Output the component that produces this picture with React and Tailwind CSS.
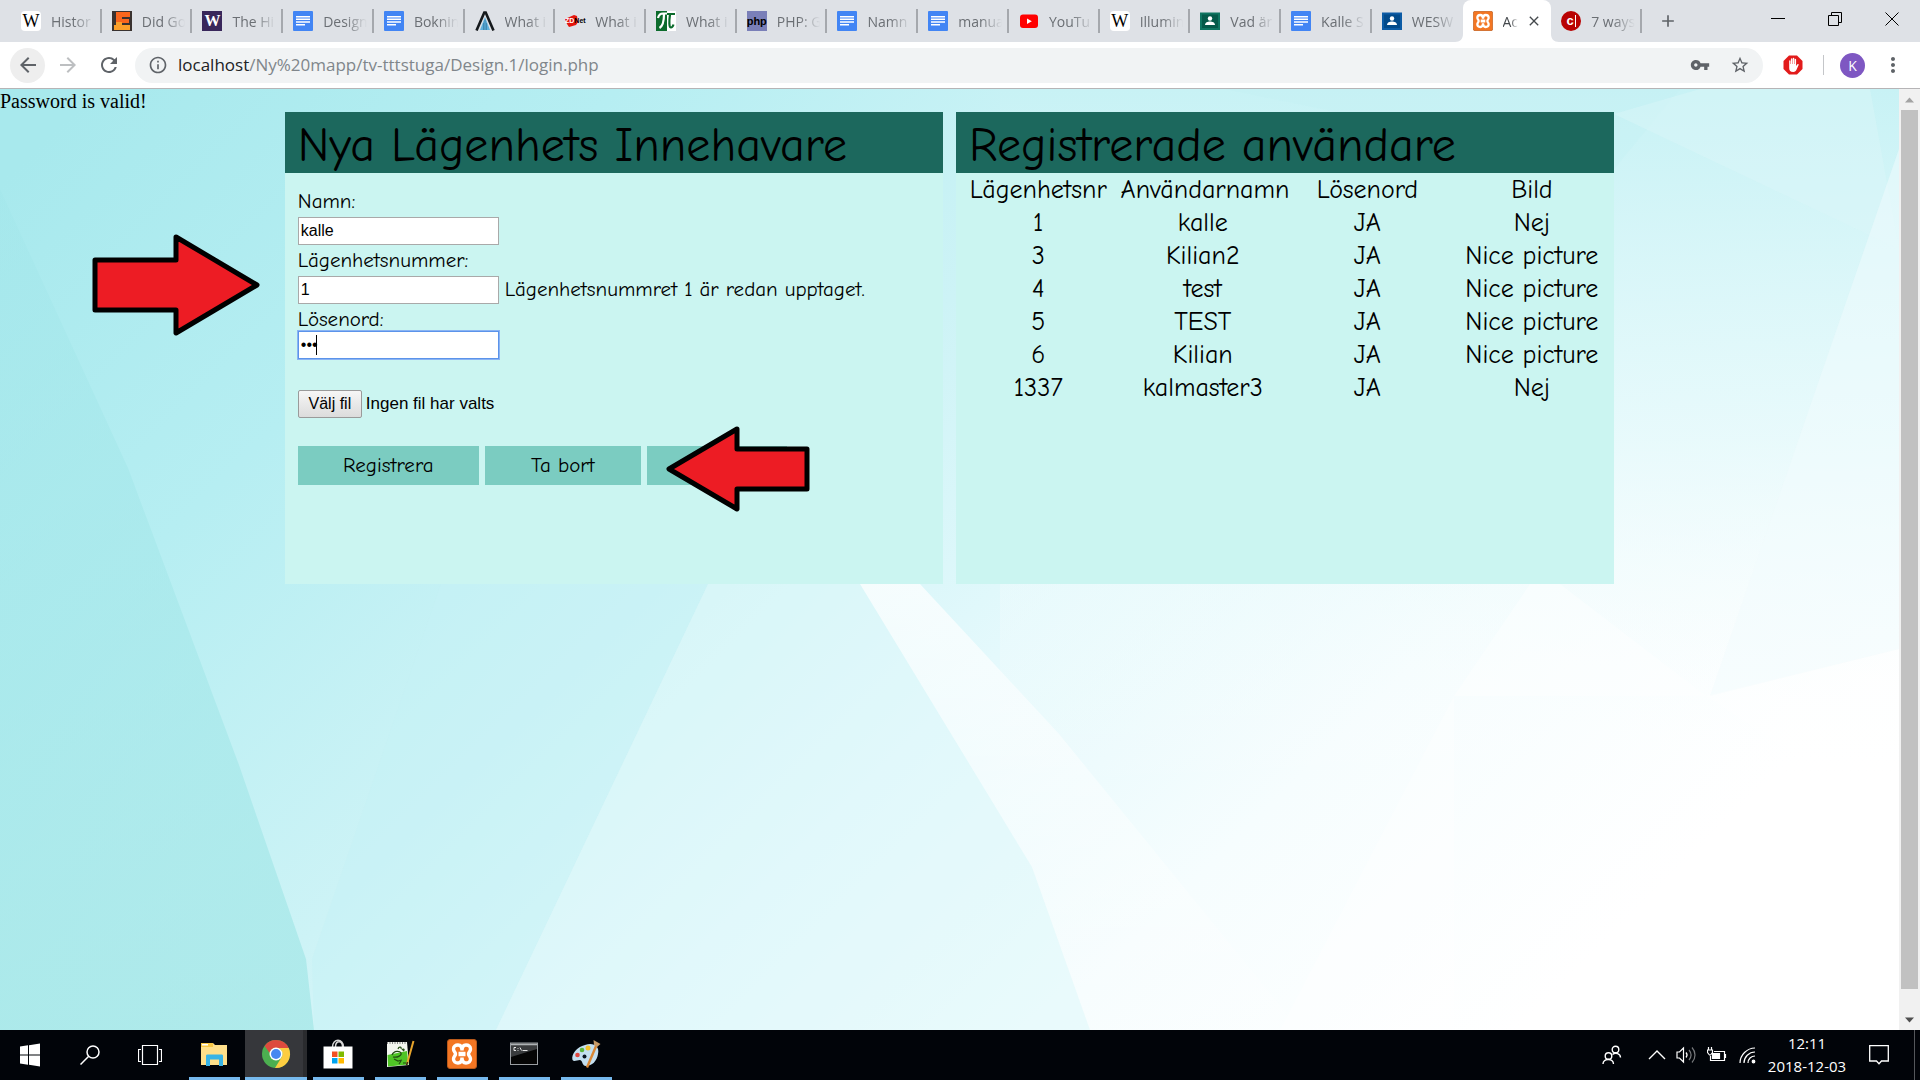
import React from "react";
import {
  MdArrowBack,
  MdArrowForward,
  MdRefresh,
  MdInfoOutline,
  MdVpnKey,
  MdStarBorder,
  MdMoreVert,
  MdAdd,
  MdClose,
} from "react-icons/md";

const UI = "font-['Segoe_UI','Open_Sans',sans-serif]";

/* ---------- favicons ---------- */

function WikiIcon() {
  return (
    <span className="flex size-5 items-center justify-center rounded-sm bg-white font-['Liberation_Serif',serif] text-[18px] leading-5 text-black">
      W
    </span>
  );
}

function UwIcon() {
  return (
    <span className="flex size-5 items-center justify-center bg-[#39275b] font-['Liberation_Serif',serif] text-[16px] leading-5 font-bold text-white">
      W
    </span>
  );
}

function EIcon() {
  return (
    <svg viewBox="0 0 20 20" className="size-5" aria-hidden="true">
      <rect width="20" height="20" fill="#3a3230" />
      <path d="M4 1h14v5h-8v2h7v4h-7v2h8v5H2v-5h2z" fill="#f9661d" />
      <path d="M4 11h6v3h8v5H2v-5h2z" fill="#fba02a" />
    </svg>
  );
}

function DocIcon() {
  return (
    <svg viewBox="0 0 20 20" className="size-5" aria-hidden="true">
      <rect width="20" height="20" rx="1" fill="#4285f4" />
      <path d="M3 4.900h14v1.500H3zM3 7.500h14V9H3zM3 10.200h14v1.500H3zM3 12.900h9v1.500H3z" fill="#fff" />
    </svg>
  );
}

function PeakIcon() {
  return (
    <svg viewBox="0 0 20 20" className="size-5" aria-hidden="true">
      <path d="M10 6l5 13H5z" fill="#5fb0dc" />
      <path d="M8.500 12v7M10 9v10M11.500 12v7" stroke="#2c6f97" strokeWidth=".6" />
      <path d="M1.500 19.500L9.300 1.500h1.400l7.800 18" fill="none" stroke="#15191c" strokeWidth="2.600" />
    </svg>
  );
}

function ZdIcon() {
  return (
    <span className="relative flex size-5 items-center justify-center font-['Liberation_Sans',sans-serif] text-[7px] leading-5 font-bold">
      <svg viewBox="0 0 20 20" className="absolute inset-0" aria-hidden="true">
        <path d="M0 8l9-4 3 1 1 6-2 3-7 2-2-3z" fill="#e5150c" />
      </svg>
      <span className="relative text-white">ZD</span>
      <span className="relative text-black">Net</span>
    </span>
  );
}

function PiIcon() {
  return (
    <span className="relative flex size-5 items-center justify-center bg-white">
      <svg viewBox="0 0 20 20" className="size-5" aria-hidden="true">
        <path d="M0 0h11v20H0z" fill="#0c6b2c" />
        <path d="M2 7c1-4 3-4.500 5-4.500h4M8 3c0 7-1 12-4.500 14" fill="none" stroke="#fff" strokeWidth="2.200" />
        <path d="M11 3h8M14 3.500c-1 7-1 13 1 13 1.500 0 2-1.500 2.500-3" fill="none" stroke="#0c6b2c" strokeWidth="2.200" />
      </svg>
    </span>
  );
}

function PhpIcon() {
  return (
    <span className="flex size-5 items-center justify-center bg-[#7a7fb8] font-['Liberation_Sans',sans-serif] text-[11px] leading-5 font-bold text-black">
      php
    </span>
  );
}

function YouTubeIcon() {
  return (
    <svg viewBox="0 0 20 20" className="size-5" aria-hidden="true">
      <rect x="1" y="3.500" width="18" height="13.500" rx="3" fill="#f00" />
      <path d="M8 7.400v5.600l4.800-2.800z" fill="#fff" />
    </svg>
  );
}

function ClassroomGlyph() {
  return (
    <>
      <circle cx="10" cy="7.500" r="2.200" fill="#fff" />
      <path d="M5 14c0-2.600 2.600-3.600 5-3.600s5 1 5 3.600z" fill="#fff" />
    </>
  );
}

function ClassroomGreen() {
  return (
    <svg viewBox="0 0 20 20" className="size-5" aria-hidden="true">
      <rect y="1.500" width="20" height="17.500" fill="#0f7561" />
      <rect x="2" y="3.500" width="16" height="13.500" fill="#055a4a" />
      <ClassroomGlyph />
    </svg>
  );
}

function ClassroomBlue() {
  return (
    <svg viewBox="0 0 20 20" className="size-5" aria-hidden="true">
      <rect y="1.500" width="20" height="17.500" fill="#0c5ba5" />
      <rect x="2" y="3.500" width="16" height="13.500" fill="#024a8b" />
      <ClassroomGlyph />
    </svg>
  );
}

function XamppIcon({ className }) {
  return (
    <svg viewBox="0 0 30 30" className={className} aria-hidden="true">
      <rect x=".5" y=".5" width="29" height="29" rx="2.500" fill="#f37623" stroke="#b9591a" />
      <path
        d="M15 11.500c0-4-1.500-5.500-4-5.500S6.500 7.500 6.500 10c0 2.600 2 3.300 2 5s-2 2.400-2 5c0 2.500 2 4 4.500 4s4-1.500 4-5.500c0 4 1.500 5.500 4 5.500s4.500-1.500 4.500-4c0-2.600-2-3.300-2-5s2-2.400 2-5c0-2.500-2-4-4.500-4s-4 1.500-4 5.500z"
        fill="none"
        stroke="#fff"
        strokeWidth="3.400"
      />
      <path d="M11.500 15h7" stroke="#fff" strokeWidth="4.500" />
    </svg>
  );
}

function CIcon() {
  return (
    <span className="flex size-5 items-center justify-center gap-px rounded-full bg-[#b90202] font-['Liberation_Sans',sans-serif] text-[13px] leading-5 font-bold text-white">
      c<span className="h-3 w-px bg-white" />
    </span>
  );
}

/* ---------- browser chrome ---------- */

const TABS = [
  { title: "Histor", icon: <WikiIcon /> },
  { title: "Did Go", icon: <EIcon /> },
  { title: "The Hi", icon: <UwIcon /> },
  { title: "Design", icon: <DocIcon /> },
  { title: "Boknin", icon: <DocIcon /> },
  { title: "What i", icon: <PeakIcon /> },
  { title: "What i", icon: <ZdIcon /> },
  { title: "What i", icon: <PiIcon /> },
  { title: "PHP: G", icon: <PhpIcon /> },
  { title: "Namn", icon: <DocIcon /> },
  { title: "manua", icon: <DocIcon /> },
  { title: "YouTu", icon: <YouTubeIcon /> },
  { title: "Illumin", icon: <WikiIcon /> },
  { title: "Vad är", icon: <ClassroomGreen /> },
  { title: "Kalle S", icon: <DocIcon /> },
  { title: "WESW", icon: <ClassroomBlue />, bare: true },
  { title: "Ac", icon: <XamppIcon className="size-5" />, active: true },
  { title: "7 ways", icon: <CIcon /> },
];

function Tab({ tab }) {
  if (tab.active) {
    return (
      <div className="relative flex h-full min-w-0 flex-1 items-center rounded-t-lg bg-white pl-[10px]">
        <svg viewBox="0 0 8 8" className="absolute bottom-0 -left-2 size-2" aria-hidden="true">
          <path d="M8 0v8H0c5 0 8-3 8-8z" fill="#fff" />
        </svg>
        <svg viewBox="0 0 8 8" className="absolute -right-2 bottom-0 size-2" aria-hidden="true">
          <path d="M0 0v8h8C3 8 0 5 0 0z" fill="#fff" />
        </svg>
        <button type="button" className="flex items-center gap-[10px] text-[#45494d]">
          <span className="shrink-0">{tab.icon}</span>
          <span className="whitespace-nowrap mask-r-from-50%">{tab.title}</span>
        </button>
        <button type="button" aria-label="Stäng flik" className="ml-2 text-[#45494d]">
          <MdClose className="size-4" />
        </button>
      </div>
    );
  }
  return (
    <button
      type="button"
      className={
        tab.bare
          ? "flex h-6 min-w-0 flex-1 items-center gap-[10px] border-r-2 border-transparent pl-[10px] text-[#6b6f74]"
          : "flex h-6 min-w-0 flex-1 items-center gap-[10px] border-r-2 border-[#a5a8ad] pl-[10px] text-[#6b6f74]"
      }
    >
      <span className="shrink-0">{tab.icon}</span>
      <span className="min-w-0 flex-1 text-left whitespace-nowrap mask-r-from-45% mask-r-to-90%">{tab.title}</span>
    </button>
  );
}

function TabStrip() {
  return (
    <div className={`flex h-[42px] items-center bg-[#dee1e6] pl-[11px] text-[14px] ${UI}`}>
      <div className="flex h-full flex-1 items-center">
        {TABS.map((tab, i) => (
          <Tab key={i} tab={tab} />
        ))}
      </div>
      <div className="flex h-full w-[278px] items-center">
        <button type="button" aria-label="Ny flik" className="ml-4 text-[#5f6368]">
          <MdAdd className="size-5" />
        </button>
        <div className="ml-auto flex h-full items-center pb-1 text-black">
          <button type="button" aria-label="Minimera" className="flex w-[57px] justify-center">
            <svg viewBox="0 0 14 14" className="size-[14px]" aria-hidden="true">
              <path d="M0 6.500h14" stroke="currentColor" />
            </svg>
          </button>
          <button type="button" aria-label="Återställ" className="flex w-[57px] justify-center">
            <svg viewBox="0 0 14 14" className="size-[14px]" fill="none" stroke="currentColor" aria-hidden="true">
              <path d="M.5 3.500h10v10H.5zM3.500 3V.500h10v10H11" />
            </svg>
          </button>
          <button type="button" aria-label="Stäng" className="flex w-[57px] justify-center">
            <svg viewBox="0 0 14 14" className="size-[14px]" aria-hidden="true">
              <path d="M.5.500l13 13M13.500.500l-13 13" stroke="currentColor" />
            </svg>
          </button>
        </div>
      </div>
    </div>
  );
}

function AdBlockIcon() {
  return (
    <svg viewBox="0 0 20 20" className="size-5" aria-hidden="true">
      <path d="M6 .5h8L19.500 6v8L14 19.500H6L.5 14V6z" fill="#e21b1b" />
      <path
        d="M6.200 10V6c0-1 1.300-1 1.300 0v3h.4V4c0-1 1.500-1 1.500 0v5h.4V3.400c0-1 1.500-1 1.500 0V9h.4V4.500c0-1 1.400-1 1.400 0V11l1.200-1.600c.7-.7 1.600-.2 1.300.6l-2 4.500c-.6 1.500-1.500 2.500-3.300 2.500-3 0-4.100-1.500-4.100-4z"
        fill="#fff"
      />
    </svg>
  );
}

function Toolbar() {
  return (
    <div className="flex h-[47px] items-center border-b border-[#b6b4b6] bg-white pr-[15px] pl-[10px] text-[#5f6368]">
      <button
        type="button"
        aria-label="Tillbaka"
        className="flex size-[35px] items-center justify-center rounded-full bg-[#eeeeee]"
      >
        <MdArrowBack className="size-6" />
      </button>
      <button type="button" aria-label="Framåt" className="flex w-[46px] justify-center text-[#bdbfc1]">
        <MdArrowForward className="size-6" />
      </button>
      <button type="button" aria-label="Läs in igen" className="flex w-[35px] justify-center">
        <MdRefresh className="size-6" />
      </button>
      <div className="ml-[9px] flex h-[35px] flex-1 items-center rounded-full bg-[#f1f3f4] pr-[13px] pl-[13px]">
        <MdInfoOutline className="size-5" />
        <a href="#top" className={`ml-[10px] flex-1 text-[17px] leading-6 text-[#80868b] ${UI}`}>
          <span className="text-[#202124]">localhost</span>/Ny%20mapp/tv-tttstuga/Design.1/login.php
        </a>
        <button type="button" aria-label="Lösenord">
          <MdVpnKey className="size-5" />
        </button>
        <button type="button" aria-label="Bokmärk" className="ml-5">
          <MdStarBorder className="size-5" />
        </button>
      </div>
      <button type="button" aria-label="AdBlock" className="ml-5">
        <AdBlockIcon />
      </button>
      <span className="ml-5 h-5 w-px bg-[#c4c6c9]" />
      <button
        type="button"
        className={`ml-4 flex size-[25px] items-center justify-center rounded-full bg-[#7e57c2] text-[14px] text-white ${UI}`}
      >
        K
      </button>
      <button type="button" aria-label="Meny" className="ml-4">
        <MdMoreVert className="size-6" />
      </button>
    </div>
  );
}

/* ---------- page ---------- */

function Backdrop() {
  return (
    <svg
      viewBox="0 0 1899 941"
      preserveAspectRatio="none"
      className="absolute inset-0 size-full"
      aria-hidden="true"
    >
      <defs>
        <linearGradient id="base" x1="0" y1="0.1" x2="1" y2="0.6">
          <stop offset="0" stopColor="#a8e9ed" />
          <stop offset=".22" stopColor="#b6eef2" />
          <stop offset=".45" stopColor="#cdf3f6" />
          <stop offset=".62" stopColor="#e4f9fc" />
          <stop offset=".8" stopColor="#f6fdfe" />
          <stop offset="1" stopColor="#ffffff" />
        </linearGradient>
        <linearGradient id="beam" x1="0" y1="0" x2="0" y2="1">
          <stop offset="0" stopColor="#fff" stopOpacity=".75" />
          <stop offset="1" stopColor="#fff" stopOpacity=".1" />
        </linearGradient>
        <linearGradient id="right" x1="0" y1="0" x2="0" y2="1">
          <stop offset="0" stopColor="#c8f2f5" />
          <stop offset=".5" stopColor="#e4f9fb" stopOpacity=".8" />
          <stop offset="1" stopColor="#fff" stopOpacity="0" />
        </linearGradient>
        <linearGradient id="left" x1="0" y1="0" x2="0" y2="1">
          <stop offset="0" stopColor="#a2e6ea" stopOpacity=".4" />
          <stop offset="1" stopColor="#a4e7e7" stopOpacity=".75" />
        </linearGradient>
      </defs>
      <rect width="1899" height="941" fill="url(#base)" />
      <path d="M0 100L128 379 239 676 306 870 314 941H0z" fill="url(#left)" />
      <path d="M441 495L312 870 314 941H496L708 495z" fill="#c6f1f5" opacity=".5" />
      <path d="M708 495L496 941H1090L1032 778 860 495z" fill="#def8fa" opacity=".55" />
      <path d="M860 495L1032 778 1090 941H1300L1059 645 920 495z" fill="url(#beam)" />
      <path d="M1000 0H1899V700H1000z" fill="url(#right)" />
      <path d="M1225 0L1614 80 1680 0z" fill="#c2f0f3" opacity=".35" />
      <path d="M1614 25L1700 0H1870L1899 160z" fill="#dcf7f8" opacity=".45" />
      <path d="M1899 60L1710 607 1899 560z" fill="#f1fbfd" opacity=".5" />
      <path d="M1530 495L1454 607H1706L1560 495z" fill="#fff" opacity=".4" />
      <path d="M1454 607L1280 941H1454z" fill="#fff" opacity=".35" />
      <path d="M1706 607L1899 560V735z" fill="#fff" opacity=".35" />
    </svg>
  );
}

function ArrowRight() {
  return (
    <svg viewBox="0 0 168 102" className="absolute top-[145px] left-[92px] w-[168px]" aria-hidden="true">
      <path
        d="M3 26H84V3L165 51 84 99V76H3z"
        fill="#ed1c24"
        stroke="#000"
        strokeWidth="5"
        strokeLinejoin="round"
      />
    </svg>
  );
}

function ArrowLeft() {
  return (
    <svg viewBox="0 0 144 86" className="absolute -top-5 left-[368px] w-[144px]" aria-hidden="true">
      <path
        d="M141 23H71V3L3 43 71 83V63H141z"
        fill="#ed1c24"
        stroke="#000"
        strokeWidth="5"
        strokeLinejoin="round"
      />
    </svg>
  );
}

function Panel({ title, children }) {
  return (
    <section className="flex min-h-[472px] flex-1 flex-col bg-[#cbf5f1]">
      <h2 className="h-[61px] bg-[#1c685d] px-[13px] pt-1 text-[48px] leading-[60px] font-normal whitespace-nowrap">
        {title}
      </h2>
      {children}
    </section>
  );
}

const FIELD =
  "block h-7 w-[201px] border border-[#a9a9a9] bg-white px-[2px] font-['Liberation_Sans',sans-serif] text-[16px] text-black outline-none";
const ACTION = "h-[39px] bg-[#7bccc1] text-[21px]";

function RegisterForm() {
  return (
    <form className="flex flex-col px-[13px] pt-[14px] text-[21px]" onSubmit={(e) => e.preventDefault()}>
      <label htmlFor="namn" className="h-[30px] leading-7">
        Namn:
      </label>
      <input id="namn" type="text" defaultValue="kalle" className={FIELD} />
      <label htmlFor="nummer" className="mt-px h-[30px] leading-7">
        Lägenhetsnummer:
      </label>
      <div className="flex gap-[6px]">
        <input id="nummer" type="text" defaultValue="1" className={FIELD} />
        <span className="leading-[26px] whitespace-nowrap">Lägenhetsnummret 1 är redan upptaget.</span>
      </div>
      <label htmlFor="losen" className="h-[27px] leading-[30px]">
        Lösenord:
      </label>
      <div className="relative w-[201px] outline-1 outline-[#8ab4f3]">
        <input
          id="losen"
          type="password"
          defaultValue="abc"
          className="block h-7 w-[201px] border border-[#5b93ea] bg-white px-[2px] font-['Liberation_Sans',sans-serif] text-[16px] text-black caret-transparent outline-none"
        />
        <span className="absolute top-1 left-[18px] h-5 w-px bg-black" />
      </div>
      <label className="mt-[31px] flex items-center gap-1 self-start font-['Liberation_Sans',sans-serif] text-[17px] leading-5">
        <input type="file" className="sr-only" />
        <span className="flex h-7 w-16 items-center justify-center rounded-xs border border-[#9a9a9a] bg-linear-to-b from-[#f6f6f6] to-[#dcdcdc] text-[16px]">
          Välj fil
        </span>
        <span>Ingen fil har valts</span>
      </label>
      <div className="relative mt-7 flex gap-[6px]">
        <button type="submit" className={`w-[181px] ${ACTION}`}>
          Registrera
        </button>
        <button type="button" className={`w-[156px] ${ACTION}`}>
          Ta bort
        </button>
        <button type="button" aria-label="Mer" className={`w-[140px] ${ACTION}`} />
        <ArrowLeft />
      </div>
    </form>
  );
}

const USERS = [
  ["1", "kalle", "JA", "Nej"],
  ["3", "Kilian2", "JA", "Nice picture"],
  ["4", "test", "JA", "Nice picture"],
  ["5", "TEST", "JA", "Nice picture"],
  ["6", "Kilian", "JA", "Nice picture"],
  ["1337", "kalmaster3", "JA", "Nej"],
];

function UserTable() {
  return (
    <table className="mt-px w-full table-fixed text-center text-[26px] leading-[33px] whitespace-nowrap">
      <thead>
        <tr>
          {["Lägenhetsnr", "Användarnamn", "Lösenord", "Bild"].map((h) => (
            <th key={h} scope="col" className="font-normal">
              {h}
            </th>
          ))}
        </tr>
      </thead>
      <tbody>
        {USERS.map((row) => (
          <tr key={row[0]}>
            {row.map((cell, i) => (
              <td key={i}>{cell}</td>
            ))}
          </tr>
        ))}
      </tbody>
    </table>
  );
}

function Scrollbar() {
  return (
    <div className="flex w-[21px] flex-col items-center bg-[#f1f1f1]" aria-hidden="true">
      <svg viewBox="0 0 21 21" className="size-[21px]">
        <path d="M6 13.500l4.500-5 4.500 5z" fill="#a3a3a3" />
      </svg>
      <span className="w-[17px] flex-1 bg-[#c1c1c1]" />
      <svg viewBox="0 0 21 21" className="mt-5 size-[21px]">
        <path d="M6 8.500l4.500 5 4.500-5z" fill="#505050" />
      </svg>
    </div>
  );
}

function Page() {
  return (
    <div className="flex flex-1">
      <main className="relative flex-1 overflow-hidden text-black">
        <Backdrop />
        <div className="relative">
          <p className="h-[23px] font-['Liberation_Serif',serif] text-[20px] leading-6">Password is valid!</p>
          <div className="mx-[15%] flex gap-[13px] font-['Comic_Sans_MS','Comic_Neue','Open_Sans',sans-serif]">
            <Panel title="Nya Lägenhets Innehavare">
              <RegisterForm />
            </Panel>
            <Panel title="Registrerade användare">
              <UserTable />
            </Panel>
          </div>
          <ArrowRight />
        </div>
      </main>
      <Scrollbar />
    </div>
  );
}

/* ---------- taskbar ---------- */

function ExplorerIcon() {
  return (
    <svg viewBox="0 0 30 30" className="size-[30px]" aria-hidden="true">
      <path d="M2 4h12l2 2h12v20H2z" fill="#ffe08a" />
      <path d="M2 4h12v4H2z" fill="#f8c845" />
      <path d="M3 5h6v1.500H3z" fill="#fff" />
      <path d="M7 17c0-1 .5-1.500 1.500-1.500h14c1 0 1.500.5 1.500 1.500v10h-4v-6.500h-9V27H7z" fill="#38b4e6" />
    </svg>
  );
}

function ChromeIcon() {
  return (
    <svg viewBox="0 0 30 30" className="size-[30px]" aria-hidden="true">
      <circle cx="15" cy="15" r="14" fill="#4caf50" />
      <path d="M15 1a14 14 0 0 1 12.700 8H15a6.500 6.500 0 0 0-6.300 5L3.600 6.900A14 14 0 0 1 15 1z" fill="#dd4b3e" />
      <path d="M27.700 9A14 14 0 0 1 14 29l6.300-10.300A6.500 6.500 0 0 0 17.500 9z" fill="#fdcd41" />
      <circle cx="15" cy="15" r="6.500" fill="#fff" />
      <circle cx="15" cy="15" r="5" fill="#4688f1" />
    </svg>
  );
}

function StoreIcon() {
  return (
    <svg viewBox="0 0 30 30" className="size-[30px]" aria-hidden="true">
      <path d="M9.500 8c0-9 11-9 11 0M12.500 8c0-7 7-7 7 0" fill="none" stroke="#d8d8d8" strokeWidth="1.400" />
      <path d="M.5 7.500h29v22H.5z" fill="#fff" />
      <path d="M9 12.500h5.500V18H9z" fill="#f25022" />
      <path d="M15.500 12.500H21V18h-5.500z" fill="#7fba00" />
      <path d="M9 19h5.500v5.500H9z" fill="#00a4ef" />
      <path d="M15.500 19H21v5.500h-5.500z" fill="#ffb900" />
    </svg>
  );
}

function NotepadIcon() {
  return (
    <svg viewBox="0 0 30 30" className="size-[30px]" aria-hidden="true">
      <path d="M2 3h20l2 23-22 2z" fill="#f3f6f0" />
      <path d="M2.500 16l19.500-4 1.500 13.500L3 27.500z" fill="#4fc526" />
      <path d="M2 4h20" stroke="#888" strokeWidth="2" strokeDasharray="1 1.500" />
      <path d="M7 16c2-5 8-4 9-2s-3 5-8 4M13 10c1-3 4-2 3 0M17 11c2-2 3 0 1 1M9 20l4 2 4-1M14 25l2-3M18 24h3" fill="none" stroke="#234d13" strokeWidth="1.200" />
      <path d="M28.500 2L22 25" stroke="#e8a52c" strokeWidth="2" />
      <path d="M22.500 23l-1 3.500" stroke="#3b2a12" strokeWidth="1.500" />
    </svg>
  );
}

function ConsoleIcon() {
  return (
    <svg viewBox="0 0 30 30" className="size-[30px]" aria-hidden="true">
      <rect x="1.500" y="4" width="27" height="21.500" fill="#050505" stroke="#9a9ea2" />
      <path d="M2 4.500h26v2H2z" fill="#aeb2b5" />
      <path d="M2 7h26v3L2 18z" fill="#3a3c3e" />
      <path d="M7 8.500H5v3h2M9 9v.8M9 11v.8M11 8.500l1.500 3M13.500 11.500h5" stroke="#e5e5e5" fill="none" />
    </svg>
  );
}

function PaintIcon() {
  return (
    <svg viewBox="0 0 30 30" className="size-[30px]" aria-hidden="true">
      <path d="M14 6c8-3 15 1 13 9-1 7-6 12-12 12-4 0-3-5-6-6-3 0-6 2-7.500 0C0 15 6 8 14 6z" fill="#c3dff0" />
      <circle cx="6.500" cy="16" r="2.300" fill="#e0473f" />
      <circle cx="11" cy="11" r="2.300" fill="#5cb63c" />
      <circle cx="17" cy="9" r="2.500" fill="#f3c12d" />
      <circle cx="13.500" cy="17.500" r="2" fill="#0a1320" />
      <path d="M25.500 6L16 28.500" stroke="#d98735" strokeWidth="2.400" />
      <path d="M22.500 1l7 4-3.500 3-3-2z" fill="#c79a67" />
    </svg>
  );
}

const APPS = [
  { name: "Utforskaren", icon: <ExplorerIcon /> },
  { name: "Chrome", icon: <ChromeIcon />, active: true },
  { name: "Microsoft Store", icon: <StoreIcon /> },
  { name: "Notepad++", icon: <NotepadIcon /> },
  { name: "XAMPP", icon: <XamppIcon className="size-[30px]" /> },
  { name: "Kommandotolken", icon: <ConsoleIcon /> },
  { name: "Paint", icon: <PaintIcon /> },
];

function Taskbar() {
  return (
    <footer className={`flex h-[50px] items-stretch bg-[#010409] text-white ${UI}`}>
      <button type="button" aria-label="Start" className="flex w-[60px] items-center justify-center">
        <svg viewBox="0 0 20 24" className="h-6 w-5" fill="#fff" aria-hidden="true">
          <path d="M0 3.500l8-1.200v9.200H0zM9 2.200L20 .5v11H9zM0 12.500h8v9.200l-8-1.200zM9 12.500h11v11L9 21.800z" />
        </svg>
      </button>
      <button type="button" aria-label="Sök" className="flex w-[60px] items-center justify-center">
        <svg viewBox="0 0 20 20" className="size-5" fill="none" stroke="#fff" strokeWidth="1.500" aria-hidden="true">
          <circle cx="13" cy="7" r="6" />
          <path d="M8.700 11.300L.5 19.500" />
        </svg>
      </button>
      <button type="button" aria-label="Aktivitetsvyn" className="flex w-[60px] items-center justify-center">
        <svg viewBox="0 0 24 20" className="h-5 w-6" fill="none" stroke="#fff" aria-hidden="true">
          <path d="M4.500 .5h15v19h-15zM3 4.500H.5v12H3M21 4.500h2.500v12H21" strokeWidth="1.200" />
        </svg>
      </button>
      <div className="ml-[3px] flex">
        {APPS.map((app) => (
          <button
            key={app.name}
            type="button"
            aria-label={app.name}
            className={
              app.active
                ? "flex w-[62px] flex-col items-center bg-[#36373b] shadow-[inset_-4px_0_#2a2b2e]"
                : "flex w-[62px] flex-col items-center"
            }
          >
            <span className="flex flex-1 items-center">{app.icon}</span>
            <span
              className={app.active ? "h-[3px] w-full bg-[#76b9ed]" : "h-[3px] w-[51px] bg-[#76b9ed]"}
            />
          </button>
        ))}
      </div>
      <div className="ml-auto flex items-center">
        <svg viewBox="0 0 20 20" className="size-5" fill="none" stroke="#fff" strokeWidth="1.400" aria-hidden="true">
          <circle cx="13.500" cy="4.500" r="3.300" />
          <circle cx="6.500" cy="11" r="3.300" />
          <path d="M1 19c0-6 10.500-6 10.500 0M10.500 9.500c3-2.500 8-1 8 3" />
        </svg>
        <svg viewBox="0 0 18 10" className="ml-[26px] h-[10px] w-[18px]" fill="none" stroke="#fff" strokeWidth="1.400" aria-hidden="true">
          <path d="M1 9l8-8 8 8" />
        </svg>
        <svg viewBox="0 0 21 18" className="ml-[10px] h-[18px] w-[21px]" fill="none" stroke="#fff" strokeWidth="1.200" aria-hidden="true">
          <path d="M1 6h2.500l4-4v14l-4-4H1zM10 6.500c1.300 1.500 1.300 3.500 0 5" />
          <path d="M13 4c2.500 3 2.500 7 0 10M16 1.500c4 4.500 4 10.500 0 15" stroke="#77797c" />
        </svg>
        <svg viewBox="0 0 20 16" className="ml-[10px] h-4 w-5" fill="none" stroke="#fff" strokeWidth="1.200" aria-hidden="true">
          <path d="M7 4.500h10.500v9h-14V9M18.500 7v4M1.500 0v2.500M4.500 0v2.500M.5 3h5v2.500L3.500 8h-1L.5 5.500z" />
          <path d="M5.500 6.500h7v5h-7z" fill="#fff" />
        </svg>
        <svg viewBox="0 0 17 17" className="ml-3 size-[17px]" fill="none" stroke="#fff" strokeWidth="1.200" aria-hidden="true">
          <path d="M1 16C1 8 8 1 16 1M5 16C5 10 10 5 16 5M9 16c0-4 3-7 7-7" />
          <circle cx="14.500" cy="14.500" r="1.300" fill="#fff" />
        </svg>
        <div className="ml-[9px] flex w-[84px] flex-col items-center text-[15px] leading-[23px] whitespace-nowrap">
          <span>12:11</span>
          <span>2018-12-03</span>
        </div>
        <button type="button" aria-label="Meddelanden" className="ml-5">
          <svg viewBox="0 0 20 20" className="size-5" fill="none" stroke="#fff" strokeWidth="1.300" aria-hidden="true">
            <path d="M.7.700h18.600V16H12.500L10 18.700 7.500 16H.7z" />
          </svg>
        </button>
      </div>
      <span className="mr-[5px] ml-[25px] w-px bg-[#54575b]" />
    </footer>
  );
}

export default function App() {
  return (
    <div id="top" className="flex min-h-screen flex-col">
      <header>
        <TabStrip />
        <Toolbar />
      </header>
      <Page />
      <Taskbar />
    </div>
  );
}
